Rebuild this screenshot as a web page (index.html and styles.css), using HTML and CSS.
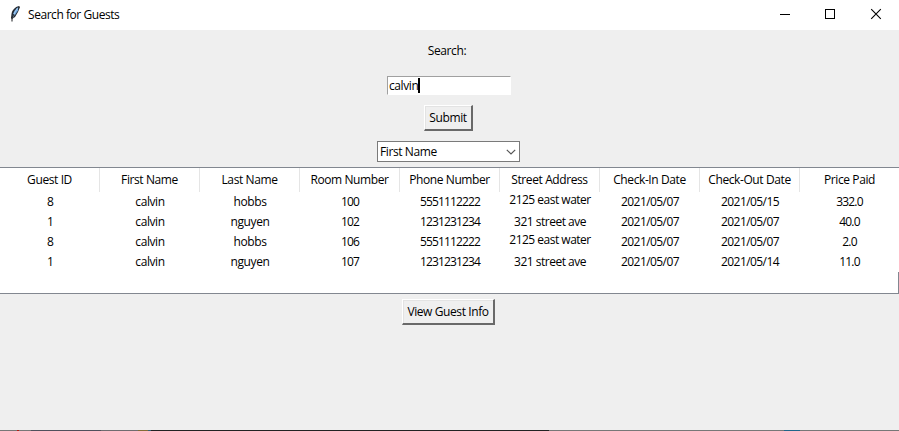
FILE: index.html
```html
<!DOCTYPE html>
<html lang="en">
<head>
<meta charset="utf-8">
<title>Search for Guests</title>
<link rel="stylesheet" href="styles.css">
</head>
<body>
<header class="titlebar">
  <svg class="feather" width="12" height="18" viewBox="0 0 12 18"><path d="M10 1C6 2 3 5 2.500 9L2 13l1 1 3-2 3-5 2-5Z" fill="#24282e"/><path d="M9.200 2C6.500 4 4 7 3.500 11.500l2.500-1.500 3-4.500Z" fill="#6ba5df"/><path d="M8.500 3L6 7l-2.500 6" fill="none" stroke="#b9d5ef" stroke-width=".8"/><path d="M5 9l-2 4v3.500" fill="none" stroke="#17191c" stroke-width="1"/></svg>
  <h1 class="title">Search for Guests</h1>
  <div class="controls">
    <svg width="46" height="30" viewBox="0 0 46 30" shape-rendering="crispEdges"><path d="M19 14.500h10" stroke="#000"/></svg>
    <svg width="46" height="30" viewBox="0 0 46 30" shape-rendering="crispEdges"><path d="M18.500 9.500h9v9h-9z" fill="none" stroke="#000"/></svg>
    <svg width="46" height="30" viewBox="0 0 46 30"><path d="M18.200 9.200l9.600 9.600M27.800 9.200l-9.600 9.600" stroke="#000" stroke-width="1.100"/></svg>
  </div>
</header>
<main class="content">
  <label class="search-label">Search:</label>
  <div class="entry"><span>calvin</span><i class="caret"></i></div>
  <button class="button submit">Submit</button>
  <div class="combo"><span>First Name</span><svg width="10" height="6" viewBox="0 0 10 6"><path d="M.8.8L5 5 9.200.8" fill="none" stroke="#555" stroke-width="1.200"/></svg></div>
  <section class="tree">
    <div class="row head"><span class="id">Guest ID</span><span>First Name</span><span>Last Name</span><span>Room Number</span><span>Phone Number</span><span>Street Address</span><span>Check-In Date</span><span>Check-Out Date</span><span>Price Paid</span></div>
    <div class="row"><b>8</b><span>calvin</span><span>hobbs</span><b>100</b><b>5551112222</b><span class="street two-line">2125 east water</span><b class="date">2021/05/07</b><b class="date">2021/05/15</b><b>332.0</b></div>
    <div class="row"><b>1</b><span>calvin</span><span>nguyen</span><b>102</b><b>1231231234</b><span class="street">321 street ave</span><b class="date">2021/05/07</b><b class="date">2021/05/07</b><b>40.0</b></div>
    <div class="row"><b>8</b><span>calvin</span><span>hobbs</span><b>106</b><b>5551112222</b><span class="street two-line">2125 east water</span><b class="date">2021/05/07</b><b class="date">2021/05/07</b><b>2.0</b></div>
    <div class="row"><b>1</b><span>calvin</span><span>nguyen</span><b>107</b><b>1231231234</b><span class="street">321 street ave</span><b class="date">2021/05/07</b><b class="date">2021/05/14</b><b>11.0</b></div>
    <div class="blank"></div>
  </section>
  <button class="button view">View Guest Info</button>
</main>
<footer class="edge"></footer>
</body>
</html>
```
FILE: styles.css
```css
* { box-sizing: border-box; }
body {
  margin: 0;
  width: 899px;
  height: 431px;
  overflow: hidden;
  display: flex;
  flex-direction: column;
  background: #efefef;
  color: #000;
  font: 12px/16px "Open Sans", "Noto Sans", sans-serif;
  letter-spacing: -0.4px;
}
.titlebar { height: 30px; flex: none; background: #fff; display: flex; }
.feather { margin: 5px 7px 0 9px; }
.title { margin: 7px 0 0; font: inherit; letter-spacing: -0.45px; white-space: nowrap; }
.controls { display: flex; margin-left: auto; }
.content { flex: 1; display: flex; flex-direction: column; align-items: center; }
.search-label { margin-top: 13px; height: 16px; margin-right: 5px; }
.entry {
  width: 124px; height: 19px; margin-top: 17px; margin-right: 1px;
  display: flex; align-items: center;
  padding: 0 1px;
  background: #fff;
  border: 1px solid #fff; border-top-color: #a0a0a0; border-left-color: #a0a0a0;
}
.caret { width: 2px; height: 15px; background: #000; margin-left: -0.5px; }
.button {
  padding: 0;
  font: inherit; letter-spacing: inherit; color: #000;
  white-space: nowrap;
  background: #efefef;
  border: solid; border-width: 1px 2px 2px 1px;
  border-color: #fff #696969 #696969 #fff;
  border-right-width: 2px;
  box-shadow: inset 1px 1px #e3e3e3;
}
.submit { width: 49px; height: 26px; margin-top: 10px; margin-right: 2px; }
.combo {
  width: 143px; height: 21px; margin-top: 10px; margin-right: 2px;
  display: flex; align-items: center; justify-content: space-between;
  padding: 0 3px 0 2px;
  background: #fff; border: 1px solid #7a7a7a;
}
.tree {
  width: 899px; height: 127px; margin-top: 5px;
  background: #fff;
  border-top: 1px solid #828790; border-bottom: 1px solid #828790;
}
.row { display: grid; grid-template-columns: repeat(8, 100px) 99px; height: 20px; line-height: 20px; text-align: center; white-space: nowrap; }
.row b { font-weight: 400; letter-spacing: -0.86px; }
.row .date { letter-spacing: -0.58px; }
.head { height: 24px; line-height: 24px; }
.head span { border-right: 1px solid #e5e5e5; }
.head span:last-child { border-right: 0; }
.street { letter-spacing: -0.5px; }
.street.two-line { line-height: 16px; }
.blank { height: 21px; border-right: 1px solid #828790; }
.view { width: 93px; height: 26px; margin-top: 5px; margin-right: 2px; }
.edge {
  height: 1px; flex: none;
  background: linear-gradient(90deg, #777 0 17px, #b21c12 17px 19px, #777 19px 31px, #50505c 31px 101px, #706c70 101px 138px, #846b35 138px 148px, #356075 148px 151px, #222 151px 549px, #777 549px 784px, #20658a 784px 800px, #777 800px);
}
```
